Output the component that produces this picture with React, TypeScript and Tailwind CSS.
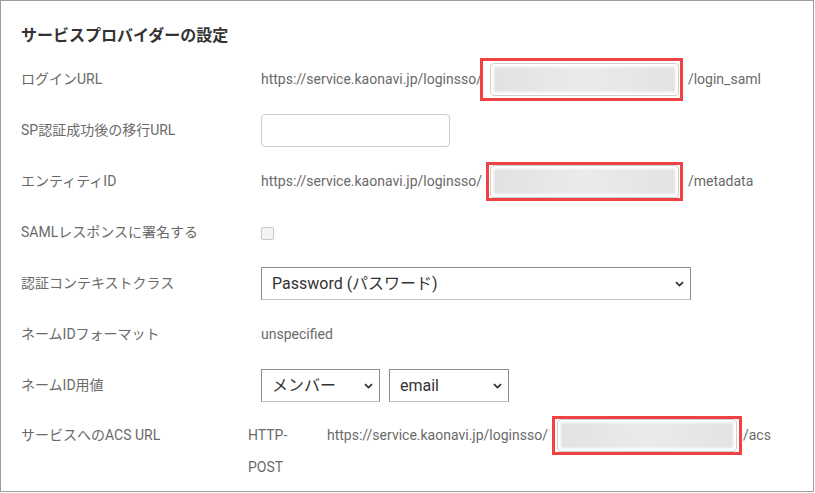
import React from 'react';

const font = { fontFamily: 'Roboto, "Noto Sans CJK JP", sans-serif' };

const Chevron: React.FC = () => (
  <svg width="9" height="6" viewBox="0 0 9 6" className="shrink-0">
    <path d="M1 1.2 L4.5 4.6 L8 1.2" fill="none" stroke="#333" strokeWidth="1.8" />
  </svg>
);

// redacted tenant slug, boxed in red
const MaskedInput: React.FC<{ outer: string; inner: string }> = ({ outer, inner }) => (
  <div className={`shrink-0 border-[3px] border-[#f04242] ${outer}`}>
    <div className={`rounded-[4px] border border-[#cfcfcf] bg-white p-[3px] ${inner}`}>
      <div className="h-full w-full bg-gradient-to-r from-[#e2e2e2] via-[#ebebeb] to-[#e3e3e3] blur-[1px]" />
    </div>
  </div>
);

interface RowProps {
  label: string;
  children: React.ReactNode;
}

const Row: React.FC<RowProps> = ({ label, children }) => (
  <div className="flex h-[51px] items-center">
    <div className="w-[240px] shrink-0 text-[14px] text-[#6a6a6a]">{label}</div>
    <div className="flex items-center text-[14px] text-[#6a6a6a]">{children}</div>
  </div>
);

const Select: React.FC<{ value: string; width: string }> = ({ value, width }) => (
  <div
    className={`flex h-[33px] items-center justify-between border border-[#8c8c8c] border-b-[#c2c2c2] bg-white pl-[10px] pr-[6px] text-[16px] text-[#333] ${width}`}
  >
    <span>{value}</span>
    <Chevron />
  </div>
);

export default function App() {
  return (
    <div style={font} className="h-[492px] w-[814px] border border-[#9c9c9c] bg-white pl-[20px]">
      <h2 className="mt-[25px] mb-[8px] h-[20px] text-[16px] font-bold leading-[20px] text-[#333]">
        サービスプロバイダーの設定
      </h2>

      <Row label="ログインURL">
        <span>https://service.kaonavi.jp/loginsso/</span>
        <MaskedInput outer="ml-[-2px] pt-[2px] pb-[2px] pl-[7px] pr-[1px]" inner="h-[33px] w-[189px]" />
        <span className="ml-[5px]">/login_saml</span>
      </Row>

      <Row label="SP認証成功後の移行URL">
        <div className="h-[33px] w-[189px] rounded-[4px] border border-[#cccccc] bg-white" />
      </Row>

      <Row label="エンティティID">
        <span>https://service.kaonavi.jp/loginsso/</span>
        <MaskedInput outer="ml-[4px] px-[1px]" inner="h-[33px] w-[189px]" />
        <span className="ml-[5px]">/metadata</span>
      </Row>

      <Row label="SAMLレスポンスに署名する">
        <div className="mt-[2px] h-[13px] w-[13px] rounded-[2px] border border-[#c8c8c8] bg-[#f4f4f4]" />
      </Row>

      <Row label="認証コンテキストクラス">
        <Select value="Password (パスワード)" width="w-[430px]" />
      </Row>

      <Row label="ネームIDフォーマット">
        <span>unspecified</span>
      </Row>

      <Row label="ネームID用値">
        <div className="flex gap-[9px]">
          <Select value="メンバー" width="w-[119px]" />
          <Select value="email" width="w-[120px]" />
        </div>
      </Row>

      <div className="flex pt-[8px]">
        <div className="flex h-[32px] w-[240px] shrink-0 items-center text-[14px] text-[#6a6a6a]">
          サービスへのACS URL
        </div>
        <div className="ml-[-13px] w-[52px] text-[14px] leading-[32px] text-[#6a6a6a]">HTTP-POST</div>
        <div className="ml-[27px] flex h-[32px] items-center text-[14px] text-[#6a6a6a]">
          <span>https://service.kaonavi.jp/loginsso/</span>
          <MaskedInput outer="ml-[4px] pl-[2px] pr-[2px]" inner="h-[33px] w-[180px]" />
          <span className="ml-[1px]">/acs</span>
        </div>
      </div>
    </div>
  );
}
